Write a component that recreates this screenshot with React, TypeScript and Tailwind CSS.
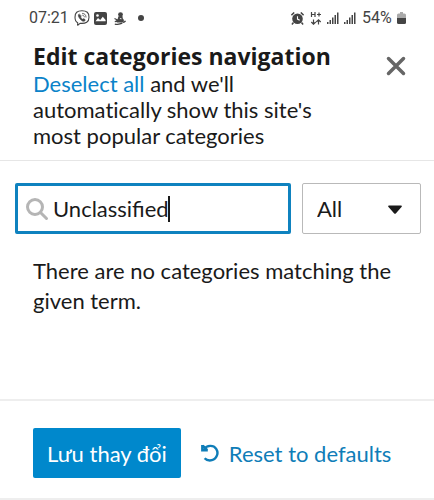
import { useRef, useState } from 'react'

const FILTERS = ['All', 'Watched', 'Tracked', 'Muted']

function StatusBar() {
  return (
    <div className="flex h-9 items-center justify-between pr-7 pl-[29px] font-['Roboto',sans-serif] text-base text-[#444]">
      <div className="flex items-center">
        <span className="w-[39px]">07:21</span>
        <svg className="ml-1.5 size-4" viewBox="0 0 16 16" fill="none" stroke="currentColor" strokeLinecap="round" strokeLinejoin="round">
          <path d="M8 .8C3.2.8 1 2.6 1 7.2c0 3 .9 4.700 2.700 5.500v2.600l2.300-2c5.900.6 9-1.300 9-6.100C15 2.600 12.800.8 8 .8Z" strokeWidth="1.100" />
          <path d="M4.900 4.100c-1.300 1-.5 2.800.9 4.600 1.400 1.700 3.200 3.100 4.500 2.500.8-.5 1.300-1.100.8-1.600L9.700 8.600l-1 .7C7.600 8.700 6.900 7.900 6.600 7l.6-.9Z" fill="currentColor" strokeWidth=".5" />
          <path d="M8.500 3.400c2.400.2 3.500 1.500 3.500 3.700M8.700 5.200c1 .1 1.500.8 1.600 1.700" strokeWidth=".8" />
        </svg>
        <svg className="ml-1 h-[13px] w-[13px]" viewBox="0 0 13 13">
          <rect width="13" height="13" rx="2" fill="currentColor" />
          <circle cx="3.500" cy="3.500" r="1.300" fill="#fff" />
          <path d="m1.500 9.300 2.500-3.300 2.200 1.900L8.800 4.700l2.800 3.300v1.300Z" fill="#fff" />
        </svg>
        <svg className="ml-[7px] h-[13px] w-3" viewBox="0 0 12 13" fill="currentColor">
          <circle cx="6.500" cy="2.600" r="2.400" />
          <path d="M4.500 4.200 8.400 4 8.800 6.500c1.500 1 1.400 2.800.2 3.900H3C1.600 9.500 2 8 3.600 7.200Z" />
          <path d="M.5 6.500 3.500 8M.8 9.700 3.500 9M9 10.300q1.800-.2 2.500-1.600M.8 12.100q4 .8 7.500-.9" fill="none" stroke="currentColor" strokeWidth="1.300" />
          <path d="M5.500 6.500 7.300 6v1.500Z" fill="#fff" />
        </svg>
        <span className="ml-3 size-[6px] rounded-full bg-current" />
      </div>
      <div className="flex items-center">
        <svg className="size-[13px]" viewBox="0 0 13 13" fill="currentColor">
          <path d="m.4 3.100 2.800-2.600M9.800.5l2.800 2.600M2.500 10.500.9 12.400M10.500 10.500l1.600 1.900" stroke="currentColor" strokeWidth="1.500" />
          <circle cx="6.500" cy="6.800" r="5.300" />
          <path d="M6.500 4.200v2.900l2.200 1.200" fill="none" stroke="#fff" strokeWidth="1.100" />
        </svg>
        <svg className="ml-1.5 h-3.5 w-3" viewBox="0 0 12 14" fill="none" stroke="currentColor" strokeWidth="1.200">
          <path d="M1.500 1v5M5 1v5M1.500 3.500H5M7 3.500h4M9 1.500v4" />
          <path d="M3.500 8.500v4.700M1.300 11l2.200 2.200L5.700 11M8.500 13.500V8.700M6.300 11l2.200-2.200 2.200 2.200" />
        </svg>
        {[0, 1].map((sim) => (
          <svg key={sim} className="ml-[5px] h-3 w-3" viewBox="0 0 12 12" fill="currentColor">
            <path d="M0 10h1.500v2H0zM2.500 8H4v4H2.500zM5 5.500h1.500V12H5zM7.500 3H9v9H7.500zM10 .5h1.500V12H10z" />
          </svg>
        ))}
        <span className="ml-1.5 w-[33px]">54%</span>
        <svg className="ml-0.5 h-3 w-[9px]" viewBox="0 0 9 12">
          <path d="M3 0h3v1.500h1.500Q9 1.500 9 3v3H0V3q0-1.500 1.500-1.500H3Z" fill="#aaa" />
          <path d="M0 6h9v4.500Q9 12 7.500 12h-6Q0 12 0 10.500Z" fill="currentColor" />
        </svg>
      </div>
    </div>
  )
}

export default function App() {
  const [term, setTerm] = useState('Unclassified')
  const [filter, setFilter] = useState('All')
  const input = useRef<HTMLInputElement>(null)

  const deselect = () => {
    setTerm('')
    input.current?.focus()
  }

  return (
    <div className="min-h-screen bg-white font-['Lato',sans-serif] text-[22px] text-[#1a1a1a]">
      <StatusBar />

      <header className="flex items-start justify-between border-b border-[#e6e6e6] pt-1.5 pr-7 pb-[11px] pl-[33px] leading-[26px]">
        <div>
          <h1 className="pb-px font-['Open_Sans',sans-serif] text-[23px] leading-7 font-bold whitespace-nowrap">
            Edit categories navigation
          </h1>
          <p className="max-w-[290px] [font-variant-ligatures:none]">
            <button type="button" onClick={deselect} className="text-[#0b83c9]">
              Deselect all
            </button>{' '}
            and we'll automatically show this site's most popular categories
          </p>
        </div>
        <button type="button" aria-label="Close" className="mt-3.5 text-[#666]">
          <svg className="size-5" viewBox="0 0 20 20" fill="none" stroke="currentColor" strokeWidth="3.500" strokeLinecap="round">
            <path d="m2.500 2.500 15 15M17.500 2.500l-15 15" />
          </svg>
        </button>
      </header>

      <main className="min-h-[238px] pt-[22px]">
        <div className="flex gap-[11px] pr-[13px] pl-[15px]">
          <label className="relative flex h-[51px] min-w-0 flex-1 items-center rounded-xs border-3 border-[#0f82bf] pl-[7px]">
            <svg className="size-6 shrink-0 text-[#b5b5b5]" viewBox="0 0 24 24" fill="none" stroke="currentColor" strokeWidth="3">
              <circle cx="10" cy="10" r="7.500" />
              <path d="m15.500 15.500 6 6" strokeLinecap="round" />
            </svg>
            <input
              ref={input}
              type="text"
              aria-label="Filter categories"
              value={term}
              onChange={(e) => setTerm(e.target.value)}
              className="ml-1 min-w-0 flex-1 caret-transparent outline-none"
            />
            {/* Text cursor */}
            {term === 'Unclassified' && <span className="absolute left-[150px] h-[26px] w-0.5 bg-[#1a1a1a]" />}
          </label>
          <div className="relative h-[51px] w-[119px]">
            <select
              aria-label="Category filter"
              value={filter}
              onChange={(e) => setFilter(e.target.value)}
              className="size-full appearance-none rounded-xs border border-[#b9b9b9] bg-white pl-3.5"
            >
              {FILTERS.map((name) => (
                <option key={name}>{name}</option>
              ))}
            </select>
            <svg className="pointer-events-none absolute top-[22px] right-[19px] h-[9px] w-3.5" viewBox="0 0 14 9" fill="#1a1a1a">
              <path d="M1 .5h12q1.500.5.5 1.500L8 8.200q-1 1-2 0L.5 2Q-.5 1 1 .5Z" />
            </svg>
          </div>
        </div>
        <p className="px-[33px] pt-[22px] leading-[30px]">There are no categories matching the given term.</p>
      </main>

      <footer className="flex items-center border-y-2 border-[#eee] px-[33px] pt-[27px] pb-5">
        <button type="button" className="h-[50px] rounded-xs bg-[#0088cc] px-3.5 whitespace-nowrap text-white">
          Lưu thay đổi
        </button>
        <button type="button" className="ml-5 flex items-center gap-2.5 whitespace-nowrap text-[#0f7db8]">
          <svg className="size-[18px]" viewBox="0 0 18 18" fill="none" stroke="currentColor" strokeWidth="2.400">
            <path d="M1.300 1v5.300h5.500M1.800 1.500l4.500 4.500" />
            <path d="M3 5.300C6 .8 12.500.8 15.200 4.800c3.400 5.500-.8 11.700-6.400 11.700-2 0-3.900-.8-5.200-2.200" />
          </svg>
          Reset to defaults
        </button>
      </footer>
    </div>
  )
}
